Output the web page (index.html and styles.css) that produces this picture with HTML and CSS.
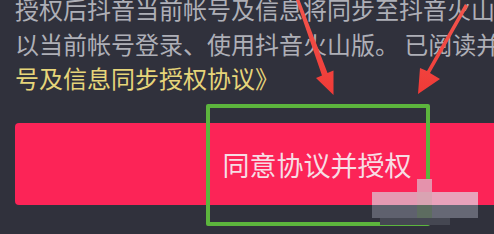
FILE: index.html
```html
<!DOCTYPE html>
<html lang="zh-CN">
<head>
<meta charset="utf-8">
<link rel="stylesheet" href="styles.css">
</head>
<body>
<div class="screen">
  <div class="desc">
    <div class="line">授权后抖音当前帐号及信息将同步至抖音火山版</div>
    <div class="line">以当前帐号登录、使用抖音火山版。 已阅读并同意</div>
    <div class="line link">号及信息同步授权协议》</div>
  </div>
  <div class="btn">同意协议并授权</div>

  <div class="highlight"></div>
  <div class="mosaic">
    <div class="m m1"></div><div class="m m2"></div><div class="m m3"></div><div class="m m4"></div><div class="m m5"></div><div class="m m6"></div><div class="m m7"></div><div class="m m8"></div>
  </div>
  <svg class="arrows" width="494" height="234" viewBox="0 0 494 234">
    <defs>
      <linearGradient id="ag" x1="0" y1="0" x2="0" y2="1">
        <stop offset="0" stop-color="#f2564d"/>
        <stop offset="1" stop-color="#f03a37"/>
      </linearGradient>
    </defs>
    <polygon fill="url(#ag)" points="296,0 299.5,0 327.5,73 333.5,70.5 333.5,95 316,78 322,75.5"/>
    <polygon fill="url(#ag)" points="465,4 468,6 430,73 440,79 418,94 420,68 427,71"/>
  </svg>
</div>
</body>
</html>
```
FILE: styles.css
```css
html, body {
  margin: 0;
  padding: 0;
  background: #30313c;
}
.screen {
  position: relative;
  width: 494px;
  height: 234px;
  overflow: hidden;
  background: #30313c;
  font-family: "Noto Sans CJK SC", "Noto Sans", sans-serif;
}
.desc {
  padding-left: 15px;
  margin-top: -8px;
}
.line {
  font-size: 24px;
  line-height: 34.5px;
  color: #aeafb7;
  white-space: nowrap;
}
.link {
  color: #e6d57a;
}
.btn {
  margin-top: 27.5px;
  margin-left: 15px;
  width: 604px;
  height: 82px;
  border-radius: 4px;
  background: #fc2457;
  color: #f7dde4;
  font-size: 27px;
  display: flex;
  align-items: center;
  justify-content: center;
}
.highlight {
  position: absolute;
  left: 206px;
  top: 104px;
  width: 216px;
  height: 114px;
  border: 4px solid #5cb53d;
  border-radius: 2px;
}
.mosaic {
  position: absolute;
  left: 372px;
  top: 179px;
  width: 106px;
  height: 46px;
}
.m { position: absolute; }
.m1 { left: 45px; top: 0; width: 15px; height: 13px; background: #e592ac; }
.m2 { left: 0; top: 13px; width: 45px; height: 13px; background: #e59ab3; }
.m3 { left: 45px; top: 13px; width: 15px; height: 13px; background: #d9a3b2; }
.m4 { left: 60px; top: 13px; width: 46px; height: 13px; background: #e8a2bb; }
.m5 { left: 0; top: 26px; width: 45px; height: 13px; background: #5f616e; }
.m6 { left: 45px; top: 26px; width: 15px; height: 13px; background: #5d6c60; }
.m7 { left: 60px; top: 26px; width: 46px; height: 13px; background: #666875; }
.m8 { left: 8px; top: 39px; width: 70px; height: 7px; background: #454752; }
.arrows {
  position: absolute;
  left: 0;
  top: 0;
}
```
